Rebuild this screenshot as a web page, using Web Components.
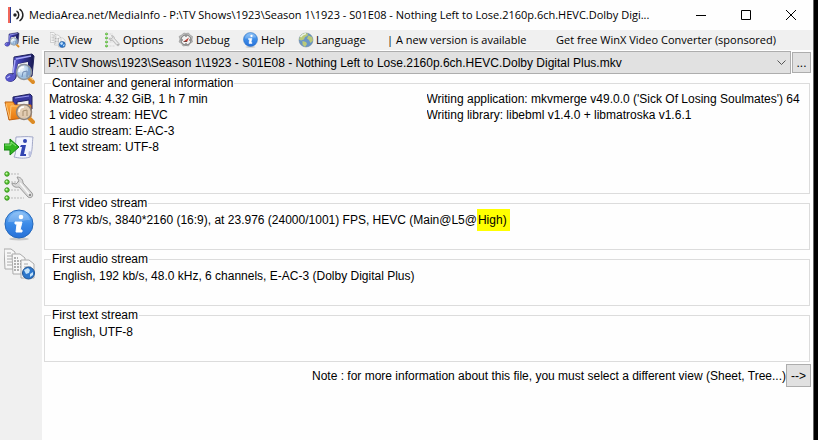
<!DOCTYPE html>
<html lang="en">
<head>
<meta charset="utf-8">
<title>MediaInfo</title>
<style>
  body {
    display: flex;
    min-height: 100vh;
    margin: 0;
    background: #000;
    color: #000;
    font: 12px/16px "Liberation Sans", Arial, sans-serif;
    --face: #f0f0f0;
    --button: #e1e1e1;
    --edge: #adadad;
    --ui-font: 11px/16px "Open Sans", "Noto Sans", sans-serif;
  }
</style>
</head>
<body>
<media-info-window></media-info-window>

<script>
const ICONS = {
  note: `
    <defs>
      <linearGradient id="n" x1="0" x2="1"><stop offset="0" stop-color="#8585ee"/><stop offset=".5" stop-color="#3d3cae"/><stop offset="1" stop-color="#17194f"/></linearGradient>
      <radialGradient id="g" cx=".35" cy=".3"><stop offset="0" stop-color="#f4fbff"/><stop offset="1" stop-color="#8fb8df"/></radialGradient>
    </defs>
    <path d="M10 4 28 1l2 2-2 20-4 2V9l-10 2-2 13c-1 5-9 6-10 1 0-4 4-5 7-4z" fill="url(#n)" stroke="#20225e"/>
    <path d="M14 11 24 9v9l-12 3z" fill="#f0f0f0"/>
    <path d="M12 6 27 3M11 7 9 20" stroke="#a8a9f8" stroke-width="1.5" fill="none"/>
    <ellipse cx="6" cy="25" rx="4.5" ry="3.5" fill="#5553c9"/>
    <path d="m3 25 3-2" stroke="#b0b0f7" stroke-width="1.5"/>
    <path d="m24 24 5 5" stroke="#dc8b25" stroke-width="4" stroke-linecap="round"/>
    <path d="m24 23 5 4" stroke="#ffd477"/>
    <circle cx="20" cy="19" r="7.5" fill="url(#g)" fill-opacity=".85" stroke="#8d949c" stroke-width="1.5"/>
    <path d="M15 19c0-3 2-5 5-5" stroke="#fff" stroke-width="1.5" fill="none"/>
    <path d="m18 24 1-5 4-1v6" stroke="#708bb4" fill="none"/>`,
  folder: `
    <defs>
      <linearGradient id="f" x1="0" y1="0" x2="0" y2="1"><stop offset="0" stop-color="#ffac42"/><stop offset="1" stop-color="#e6760d"/></linearGradient>
    </defs>
    <path d="m9 5 17-3 2 2v13l-3 2V8l-12 2v9H9z" fill="#3838a0" stroke="#20225e"/>
    <path d="m11 6 14-2" stroke="#9898ed"/>
    <path d="M1 10h8l2 3h16v12L5 28z" fill="url(#f)" stroke="#bf6212"/>
    <path d="m2 12 4 15 1-13h19" fill="none" stroke="#ffc777"/>
    <path d="m24 25 5 5" stroke="#dc8b25" stroke-width="4" stroke-linecap="round"/>
    <circle cx="20" cy="20" r="7.5" fill="#dce1e3" fill-opacity=".75" stroke="#8d8177" stroke-width="1.5"/>
    <path d="M15 20c0-3 2-5 5-5" stroke="#fff" stroke-width="1.5" fill="none"/>
    <path d="M19 24v-5l4-1v6" stroke="#a68f70" fill="none"/>`,
  report: `
    <path d="M12 6c6 0 10-1 17 0-1 6 0 13-3 20-6 2-11 1-16 0 3-5 1-13 2-20z" fill="#f2f4fd" stroke="#a2a8c7"/>
    <path d="M26 26c-2-1-2-3-1-6 2 1 3 0 3-2 0 3-1 6-2 8z" fill="#bdc3e2"/>
    <path d="M17 14h5l-2 9h2v2h-6l2-9h-2z" fill="#3245b2"/>
    <circle cx="21" cy="10" r="2" fill="#3245b2"/>
    <path d="M0 13h6V8l9 8-9 8v-5H0z" fill="#32b622" stroke="#128311"/>
    <path d="M1 14h6v-3l5 4" stroke="#8ce67c" fill="none"/>`,
  options: `
    <path d="M7 4h8M7 12h7M7 20h8M7 28h13" stroke="#b9b9b9" stroke-dasharray="2 1"/>
    <g fill="#5dca36" stroke="#36921b"><circle cx="3" cy="4" r="2.2"/><circle cx="3" cy="12" r="2.2"/><circle cx="3" cy="20" r="2.2"/><circle cx="3" cy="28" r="2.2"/></g>
    <g fill="#c9ffae"><circle cx="2.5" cy="3.5" r="1"/><circle cx="2.5" cy="11.5" r="1"/><circle cx="2.5" cy="19.5" r="1"/><circle cx="2.5" cy="27.5" r="1"/></g>
    <path d="M13 7c4 0 6 3 6 6l9 10c2 3-1 6-4 4l-9-10c-4 1-7-1-7-4l4 1 3-3z" fill="#d9d9d9" stroke="#999"/>
    <path d="m16 13 9 11" stroke="#f8f8f8" stroke-width="1.5"/>
    <circle cx="26" cy="25" r="1" fill="#777"/>`,
  info: `
    <defs>
      <linearGradient id="i" x1="0" y1="0" x2="0" y2="1"><stop offset="0" stop-color="#7bb8f5"/><stop offset=".5" stop-color="#3b8be8"/><stop offset="1" stop-color="#2871d8"/></linearGradient>
    </defs>
    <ellipse cx="15" cy="30" rx="10" ry="1.5" fill="#c9c9c9"/>
    <circle cx="15" cy="15" r="14" fill="url(#i)" stroke="#2568ba"/>
    <path d="M4 13C5 6 10 3 15 3s10 3 11 8c-6 0-11 2-22 2z" fill="#fff" fill-opacity=".2"/>
    <circle cx="17" cy="8" r="2.3" fill="#fff"/>
    <path d="M11 13h7l-2 8h2v2h-6l1-8h-2z" fill="#fff" stroke="#fff" stroke-linejoin="round"/>`,
  sheets: `
    <g fill="#f7f7f7" stroke="#aaa"><path d="M0 1h7l4 3v17H1z"/><path d="M8 6h8l5 4v16H9z"/><path d="M17 12h8l5 4v14H17z"/></g>
    <path d="M3 5h4M3 8h6M3 11h5M3 14h5M3 17h5M20 16h4M20 19h7M20 22h6" stroke="#aaa"/>
    <path d="M10 10h4M10 13h7M10 16h7M10 19h7M10 22h6" stroke="#999" stroke-width="1.5" stroke-dasharray="2 1"/>
    <circle cx="24.5" cy="25" r="6" fill="#2d77cc" stroke="#1d5495"/>
    <path d="m20 22 4-2 2 2-1 3-3 1zm6 4 3-2v3l-3 2z" fill="#c4e3fa"/>`,
  debug: `
    <path d="m12 2 4 1 5-1 3 4 5 3-1 6 1 5-5 3-3 5-5-1-6 1-3-5-5-3 2-6-2-5 5-3z" fill="#bbb" stroke="#888"/>
    <circle cx="16" cy="16" r="10" fill="#f2f2f2" stroke="#777" stroke-width="2"/>
    <path d="M16 7v3M7 16h3M22 16h3M16 22v3" stroke="#555" stroke-width="2"/>
    <path d="m10 20 12-9-4 9z" fill="#bd382c"/><path d="m10 20 6-2 2 2z" fill="#444"/>`,
  globe: `
    <circle cx="16" cy="16" r="14" fill="#6795c7" stroke="#6a8294"/>
    <path d="m5 7 7-5 8 1-1 5-5 2-2 5-6 2-4-2zM21 7l7 3 2 7-5 5-3-6-4-3zM9 18l7 2 2 4-4 6-5-5z" fill="#bac979"/>
    <path d="M5 10c3-5 6-6 11-7" stroke="#e7f1e4" stroke-width="3" fill="none"/>`,
  app: `
    <path d="M2 0v32" stroke="#eb3323" stroke-width="3"/>
    <path d="M5 0v32" stroke="#263a91" stroke-width="2"/>
    <circle cx="14" cy="16" r="3.5" fill="#222"/>
    <path d="M17 8c6 3 6 13 0 16M23 4c9 6 9 18 0 24" fill="none" stroke="#222" stroke-width="3"/>`
};

function define(name, html, setup) {
  const template = document.createElement('template');
  template.innerHTML = html;
  customElements.define(name, class extends HTMLElement {
    constructor() {
      super();
      this.attachShadow({ mode: 'open' });
      this.shadowRoot.appendChild(template.content.cloneNode(true));
    }

    connectedCallback() {
      if (setup) setup(this, this.shadowRoot);
    }
  });
}

define('mi-icon', `
  <style>
    :host { display: block; flex: none; width: 32px; height: 32px; }
    :host([small]) { width: 16px; height: 16px; }
    svg { display: block; width: 100%; height: 100%; }
  </style>
  <svg viewBox="0 0 32 32" fill="none" aria-hidden="true"></svg>
`, (host, root) => {
  root.querySelector('svg').innerHTML = ICONS[host.getAttribute('name')];
});

define('mi-title-bar', `
  <style>
    :host {
      display: flex;
      align-items: center;
      height: 30px;
      padding-left: 8px;
      gap: 5px;
      font: var(--ui-font);
    }
    .title { flex: 1; min-width: 0; overflow: hidden; white-space: nowrap; }
    .controls { display: flex; flex: none; }
    button { width: 45px; height: 30px; padding: 0; border: 0; background: none; }
    svg { display: block; margin: auto; }
  </style>
  <mi-icon small name="app"></mi-icon>
  <div class="title"><slot></slot></div>
  <div class="controls">
    <button aria-label="Minimize"><svg width="10" height="10" stroke="#000"><path d="M0 5.500h10"/></svg></button>
    <button aria-label="Maximize"><svg width="10" height="10" stroke="#000" fill="none"><path d="M.5.5h9v9h-9z"/></svg></button>
    <button aria-label="Close"><svg width="10" height="10" stroke="#000"><path d="m0 0 10 10M10 0 0 10"/></svg></button>
  </div>
`);

define('mi-menu-item', `
  <style>
    :host { display: block; min-width: 0; }
    button {
      display: flex;
      align-items: center;
      gap: 2px;
      height: 20px;
      padding: 0;
      border: 0;
      background: none;
      color: inherit;
      font: inherit;
      white-space: nowrap;
    }
  </style>
  <button><slot name="icon"></slot><slot></slot></button>
`);

define('mi-menu-bar', `
  <style>
    :host {
      display: grid;
      grid-template-columns: 46px 55px 73px 65px 55px 89px 169px auto;
      height: 20px;
      padding-left: 4px;
      background: var(--face);
      font: var(--ui-font);
    }
  </style>
  <slot></slot>
`);

define('mi-tool-button', `
  <style>
    :host { display: block; }
    button { display: block; padding: 0; border: 0; background: none; }
  </style>
  <button><slot></slot></button>
`, (host, root) => {
  root.querySelector('button').setAttribute('aria-label', host.getAttribute('label'));
});

define('mi-tool-bar', `
  <style>
    :host {
      display: flex;
      flex-direction: column;
      flex: none;
      gap: 7px;
      box-sizing: border-box;
      width: 42px;
      padding: 3px 4px;
      background: var(--face);
    }
  </style>
  <slot></slot>
`);

define('mi-file-picker', `
  <style>
    :host { display: flex; align-items: center; gap: 1px; }
    .combo { display: grid; flex: 1; min-width: 0; align-items: center; }
    select, svg { grid-area: 1 / 1; }
    select {
      appearance: none;
      width: 100%;
      height: 23px;
      padding: 0 20px 0 3px;
      border: 1px solid var(--edge);
      border-radius: 0;
      background: var(--button);
      color: inherit;
      font: inherit;
    }
    svg { justify-self: end; margin-right: 5px; pointer-events: none; }
    button {
      width: 19px;
      height: 21px;
      padding: 0;
      border: 1px solid var(--edge);
      background: var(--button);
      font: inherit;
    }
  </style>
  <div class="combo">
    <select aria-label="File">
      <option>P:\\TV Shows\\1923\\Season 1\\1923 - S01E08 - Nothing Left to Lose.2160p.6ch.HEVC.Dolby Digital Plus.mkv</option>
    </select>
    <svg width="9" height="6" fill="none" stroke="#555"><path d="m.5.5 4 4 4-4"/></svg>
  </div>
  <button aria-label="Browse">...</button>
`);

define('mi-group', `
  <style>
    :host { display: block; }
    fieldset {
      box-sizing: border-box;
      min-width: 0;
      min-height: 55px;
      margin: 0;
      padding: 1px 5px 0 8px;
      border: 1px solid #dcdcdc;
    }
    legend { margin-left: -2px; padding: 0 1px; }
    :host([large]) fieldset { min-height: 119px; padding: 0 5px 0 4px; }
    :host([large]) legend { margin-left: 2px; }
  </style>
  <fieldset>
    <legend></legend>
    <slot></slot>
  </fieldset>
`, (host, root) => {
  root.querySelector('legend').textContent = host.getAttribute('label');
});

define('media-info-window', `
  <style>
    :host {
      display: flex;
      flex: 1;
      flex-direction: column;
      min-width: 0;
      margin-right: 4px;
      border-right: 1px solid #666;
      background: #fefefe;
    }
    .work { display: flex; flex: 1; }
    main { flex: 1; min-width: 0; padding: 1px 2px 0; }
    .groups { display: flex; flex-direction: column; gap: 1px; padding: 1px 1px 0 0; }
    .columns { display: grid; grid-template-columns: 1fr 1fr; }
    .columns > div { min-width: 0; overflow: hidden; white-space: nowrap; }
    .line { display: flex; align-items: center; height: 16px; white-space: nowrap; }
    mark { padding: 3px 3px 3px 1px; background: #ff0; color: inherit; }
    footer { display: flex; justify-content: flex-end; align-items: center; padding-top: 2px; }
    footer button {
      width: 25px;
      height: 23px;
      padding: 0;
      border: 1px solid var(--edge);
      background: var(--button);
      font: inherit;
    }
  </style>
  <mi-title-bar>MediaArea.net/MediaInfo - P:\\TV Shows\\1923\\Season 1\\1923 - S01E08 - Nothing Left to Lose.2160p.6ch.HEVC.Dolby Digi...</mi-title-bar>
  <mi-menu-bar>
    <mi-menu-item><mi-icon slot="icon" small name="note"></mi-icon>File</mi-menu-item>
    <mi-menu-item><mi-icon slot="icon" small name="sheets"></mi-icon>View</mi-menu-item>
    <mi-menu-item><mi-icon slot="icon" small name="options"></mi-icon>Options</mi-menu-item>
    <mi-menu-item><mi-icon slot="icon" small name="debug"></mi-icon>Debug</mi-menu-item>
    <mi-menu-item><mi-icon slot="icon" small name="info"></mi-icon>Help</mi-menu-item>
    <mi-menu-item><mi-icon slot="icon" small name="globe"></mi-icon>Language</mi-menu-item>
    <mi-menu-item>| A new version is available</mi-menu-item>
    <mi-menu-item>Get free WinX Video Converter (sponsored)</mi-menu-item>
  </mi-menu-bar>
  <div class="work">
    <mi-tool-bar>
      <mi-tool-button label="Open file"><mi-icon name="note"></mi-icon></mi-tool-button>
      <mi-tool-button label="Open folder"><mi-icon name="folder"></mi-icon></mi-tool-button>
      <mi-tool-button label="Export"><mi-icon name="report"></mi-icon></mi-tool-button>
      <mi-tool-button label="Options"><mi-icon name="options"></mi-icon></mi-tool-button>
      <mi-tool-button label="About"><mi-icon name="info"></mi-icon></mi-tool-button>
      <mi-tool-button label="View"><mi-icon name="sheets"></mi-icon></mi-tool-button>
    </mi-tool-bar>
    <main>
      <mi-file-picker></mi-file-picker>
      <div class="groups">
        <mi-group large label="Container and general information">
          <div class="columns">
            <div>Matroska: 4.32 GiB, 1 h 7 min<br>1 video stream: HEVC<br>1 audio stream: E-AC-3<br>1 text stream: UTF-8</div>
            <div>Writing application: mkvmerge v49.0.0 ('Sick Of Losing Soulmates') 64<br>Writing library: libebml v1.4.0 + libmatroska v1.6.1</div>
          </div>
        </mi-group>
        <mi-group label="First video stream">
          <div class="line">8 773 kb/s, 3840*2160 (16:9), at 23.976 (24000/1001) FPS, HEVC (Main@L5@<mark>High)</mark></div>
        </mi-group>
        <mi-group label="First audio stream">
          <div class="line">English, 192 kb/s, 48.0 kHz, 6 channels, E-AC-3 (Dolby Digital Plus)</div>
        </mi-group>
        <mi-group label="First text stream">
          <div class="line">English, UTF-8</div>
        </mi-group>
      </div>
      <footer>
        <span>Note : for more information about this file, you must select a different view (Sheet, Tree...)</span>
        <button aria-label="Next view">--&gt;</button>
      </footer>
    </main>
  </div>
`);
</script>
</body>
</html>
